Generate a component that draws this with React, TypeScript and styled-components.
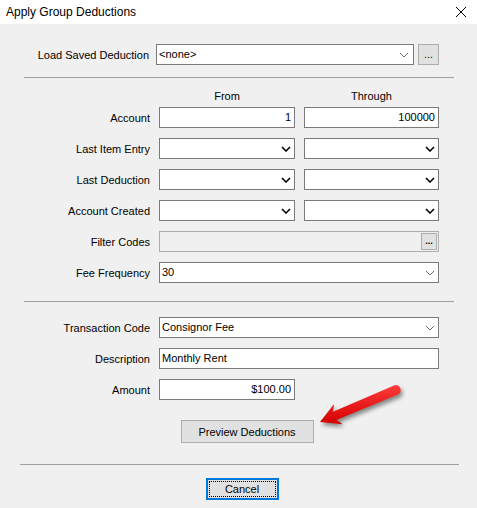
import React from 'react';
import styled, { createGlobalStyle } from 'styled-components';

const GlobalStyle = createGlobalStyle`
  html, body {
    margin: 0;
    padding: 0;
    background: #f0f0f0;
  }
  body {
    font-family: "Liberation Sans", Arial, sans-serif;
    font-size: 11px;
    color: #000;
  }
`;

const Window = styled.div`
  position: relative;
  width: 477px;
  height: 508px;
  background: #f0f0f0;
  overflow: hidden;
`;

const TitleBar = styled.div`
  height: 24px;
  background: #fff;
  display: flex;
  align-items: center;
  justify-content: space-between;
  padding: 0 8px 0 6px;
  font-size: 12px;
`;

const CloseButton = styled.span`
  width: 12px;
  height: 12px;
  display: flex;
  margin-right: 2px;
`;

const Body = styled.div`
  display: flex;
  flex-direction: column;
  padding-top: 20px;
`;

const Spacer = styled.div<{ $h: number }>`
  height: ${(p) => p.$h}px;
  flex: none;
`;

const LoadRow = styled.div`
  display: flex;
  align-items: center;
  height: 21px;
`;

const LoadLabel = styled.label`
  width: 156px;
  text-align: right;
  padding-right: 7px;
  box-sizing: border-box;
`;

const Separator = styled.hr<{ $left: number; $right: number }>`
  border: 0;
  border-top: 1px solid #a0a0a0;
  height: 0;
  margin: 0 ${(p) => p.$right}px 0 ${(p) => p.$left}px;
`;

const FormGrid = styled.div`
  display: grid;
  grid-template-columns: 150px 136px 135px;
  column-gap: 9px;
  row-gap: 10px;
  align-items: center;
`;

const ColumnHead = styled.div`
  text-align: center;
  height: 12px;
  line-height: 12px;
  align-self: start;
  margin-bottom: -5px;
`;

const Label = styled.label`
  text-align: right;
`;

const Field = styled.div<{ $wide?: boolean; $disabled?: boolean; $align?: string }>`
  grid-column: ${(p) => (p.$wide ? '2 / span 2' : 'auto')};
  height: 21px;
  box-sizing: border-box;
  border: 1px solid ${(p) => (p.$disabled ? '#adadad' : '#7a7a7a')};
  background: ${(p) => (p.$disabled ? '#f0f0f0' : '#fff')};
  display: flex;
  align-items: center;
  justify-content: ${(p) => (p.$align === 'right' ? 'flex-end' : 'space-between')};
  padding: 0 3px 0 2px;
  line-height: 19px;
`;

const Combo = styled(Field)`
  width: 258px;
  flex: none;
  padding-right: 4px;
`;

const Chevron = ({ bold }: { bold?: boolean }) => (
  <svg width="10" height="6" viewBox="0 0 10 6">
    <polyline
      points="1,1 5,5 9,1"
      fill="none"
      stroke={bold ? '#000' : '#6d6d6d'}
      strokeWidth={bold ? 1.6 : 1}
    />
  </svg>
);

const DotsButton = styled.button<{ $small?: boolean }>`
  width: ${(p) => (p.$small ? '16px' : '21px')};
  height: ${(p) => (p.$small ? '17px' : '21px')};
  margin-left: ${(p) => (p.$small ? '0' : '4px')};
  margin-right: ${(p) => (p.$small ? '-2px' : '0')};
  padding: 0;
  border: 1px solid #adadad;
  background: #e1e1e1;
  font-family: inherit;
  font-size: ${(p) => (p.$small ? '9px' : '11px')};
  font-weight: ${(p) => (p.$small ? 700 : 400)};
  line-height: 1;
  display: flex;
  align-items: center;
  justify-content: center;
  color: #000;
`;

const ButtonRow = styled.div<{ $offset: number }>`
  display: flex;
  justify-content: center;
  padding-left: ${(p) => p.$offset}px;
`;

const PushButton = styled.button<{ $focused?: boolean; $w: number }>`
  width: ${(p) => p.$w}px;
  height: ${(p) => (p.$focused ? '22px' : '23px')};
  box-sizing: border-box;
  background: #e1e1e1;
  border: ${(p) => (p.$focused ? '2px solid #0078d7' : '1px solid #adadad')};
  font-family: inherit;
  font-size: 11px;
  color: #000;
  padding: ${(p) => (p.$focused ? '1px' : '0')};
  display: flex;
  align-items: stretch;
`;

const FocusRing = styled.span<{ $focused?: boolean }>`
  flex: 1;
  display: flex;
  align-items: center;
  justify-content: center;
  outline: ${(p) => (p.$focused ? '1px dotted #000' : 'none')};
  outline-offset: -1px;
`;

const Pointer = styled.svg`
  position: absolute;
  left: 312px;
  top: 378px;
  width: 96px;
  height: 56px;
  overflow: visible;
  filter: drop-shadow(2px 3px 2px rgba(0, 0, 0, 0.45));
`;

const rows = ['Last Item Entry', 'Last Deduction', 'Account Created'];

export default function App() {
  return (
    <>
      <GlobalStyle />
      <Window>
        <TitleBar>
          <span>Apply Group Deductions</span>
          <CloseButton>
            <svg width="12" height="12" viewBox="0 0 12 12">
              <path d="M1 1 L11 11 M11 1 L1 11" stroke="#000" strokeWidth="1" />
            </svg>
          </CloseButton>
        </TitleBar>

        <Body>
          <LoadRow>
            <LoadLabel>Load Saved Deduction</LoadLabel>
            <Combo>
              <span>&lt;none&gt;</span>
              <Chevron />
            </Combo>
            <DotsButton>...</DotsButton>
          </LoadRow>

          <Spacer $h={12} />
          <Separator $left={24} $right={23} />
          <Spacer $h={12} />

          <FormGrid>
            <span />
            <ColumnHead>From</ColumnHead>
            <ColumnHead>Through</ColumnHead>

            <Label>Account</Label>
            <Field $align="right">1</Field>
            <Field $align="right">100000</Field>

            {rows.map((label) => (
              <React.Fragment key={label}>
                <Label>{label}</Label>
                <Field>
                  <span />
                  <Chevron bold />
                </Field>
                <Field>
                  <span />
                  <Chevron bold />
                </Field>
              </React.Fragment>
            ))}

            <Label>Filter Codes</Label>
            <Field $wide $disabled>
              <span />
              <DotsButton $small>...</DotsButton>
            </Field>

            <Label>Fee Frequency</Label>
            <Field $wide>
              <span>30</span>
              <Chevron />
            </Field>
          </FormGrid>

          <Spacer $h={18} />
          <Separator $left={24} $right={23} />
          <Spacer $h={15} />

          <FormGrid>
            <Label>Transaction Code</Label>
            <Field $wide>
              <span>Consignor Fee</span>
              <Chevron />
            </Field>

            <Label>Description</Label>
            <Field $wide>
              <span>Monthly Rent</span>
            </Field>

            <Label>Amount</Label>
            <Field $align="right">$100.00</Field>
          </FormGrid>

          <Spacer $h={20} />
          <ButtonRow $offset={17}>
            <PushButton $w={133}>
              <FocusRing>Preview Deductions</FocusRing>
            </PushButton>
          </ButtonRow>

          <Spacer $h={21} />
          <Separator $left={20} $right={18} />
          <Spacer $h={13} />

          <ButtonRow $offset={7}>
            <PushButton $focused $w={73}>
              <FocusRing $focused>Cancel</FocusRing>
            </PushButton>
          </ButtonRow>
        </Body>

        <Pointer viewBox="312 378 96 56">
          <defs>
            <linearGradient id="arrowRed" x1="0" y1="0" x2="0" y2="1">
              <stop offset="0" stopColor="#ff3a3a" />
              <stop offset="1" stopColor="#d40000" />
            </linearGradient>
          </defs>
          <path
            d="M320,422 L334.1,404.1 L333,411.7 L394.1,385.4 A5,5 0 0 1 397.9,394.6 L336.4,420 L342.7,424.3 Z"
            fill="url(#arrowRed)"
          />
        </Pointer>
      </Window>
    </>
  );
}
